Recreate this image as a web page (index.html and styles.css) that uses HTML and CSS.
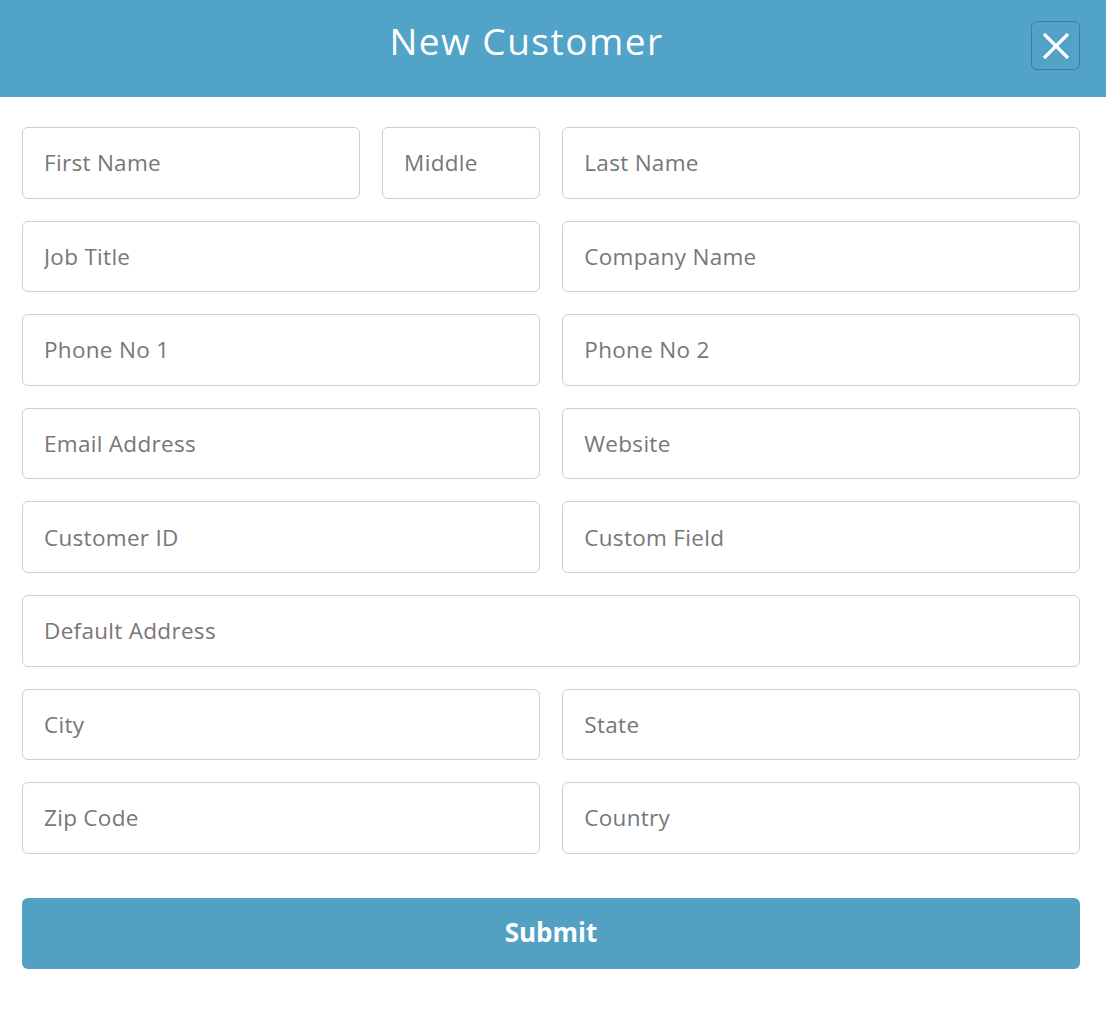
FILE: index.html
```html
<!DOCTYPE html>
<html>
<head>
<meta charset="utf-8">
<link rel="stylesheet" href="styles.css">
</head>
<body>
<div class="modal">
  <header class="head">
    <h1 class="title">New Customer</h1>
    <button class="close" aria-label="Close">
      <svg width="28" height="28" viewBox="0 0 28 28"><path d="M2 2 L26 26 M26 2 L2 26" stroke="#fff" stroke-width="3.2" stroke-linecap="butt"/></svg>
    </button>
  </header>
  <form class="form">
    <div class="row">
      <div class="split">
        <input class="field" placeholder="First Name">
        <input class="field" placeholder="Middle">
      </div>
      <input class="field" placeholder="Last Name">
    </div>
    <div class="row">
      <input class="field" placeholder="Job Title">
      <input class="field" placeholder="Company Name">
    </div>
    <div class="row">
      <input class="field" placeholder="Phone No 1">
      <input class="field" placeholder="Phone No 2">
    </div>
    <div class="row">
      <input class="field" placeholder="Email Address">
      <input class="field" placeholder="Website">
    </div>
    <div class="row">
      <input class="field" placeholder="Customer ID">
      <input class="field" placeholder="Custom Field">
    </div>
    <div class="row one">
      <input class="field" placeholder="Default Address">
    </div>
    <div class="row">
      <input class="field" placeholder="City">
      <input class="field" placeholder="State">
    </div>
    <div class="row">
      <input class="field" placeholder="Zip Code">
      <input class="field" placeholder="Country">
    </div>
    <button type="button" class="submit">Submit</button>
  </form>
</div>
</body>
</html>
```
FILE: styles.css
```css
* { box-sizing: border-box; }
html, body { margin: 0; padding: 0; background: #fff; }
body { font-family: "Open Sans", "Lato", sans-serif; }
.modal { width: 1106px; }
.head {
  height: 97px;
  background: #51a3c8;
  display: flex;
  align-items: center;
  position: relative;
}
.title {
  flex: 1;
  text-align: center;
  margin: 0 53px 16px 0;
  font-weight: 400;
  font-size: 37px;
  color: #fff;
  letter-spacing: 1.5px;
}
.close {
  position: absolute;
  right: 26px;
  top: 21px;
  width: 49px;
  height: 49px;
  border: 1px solid #3d7e9b;
  border-radius: 6px;
  background: transparent;
  display: flex;
  align-items: center;
  justify-content: center;
  padding: 0;
}
.form {
  padding: 30px 26px 0 22px;
  display: flex;
  flex-direction: column;
  gap: 22px;
}
.row {
  display: grid;
  grid-template-columns: 1fr 1fr;
  column-gap: 22.6px;
}
.row.one { grid-template-columns: 1fr; }
.split {
  display: grid;
  grid-template-columns: 1fr 157.6px;
  column-gap: 22.4px;
}
.field {
  height: 71.6px;
  width: 100%;
  border: 1px solid #cfcfcf;
  border-radius: 6px;
  padding: 0 0 0 21px;
  font-family: "Open Sans", "Lato", sans-serif;
  font-size: 22.5px;
  letter-spacing: 0.3px;
  color: #777;
  background: #fff;
}
.field::placeholder { color: #777; opacity: 1; }
.submit {
  margin-top: 22px;
  height: 71.6px;
  padding: 0 0 3px 0;
  border: none;
  border-radius: 6px;
  background: #52a1c3;
  color: #fff;
  font-family: "Open Sans", "Lato", sans-serif;
  font-weight: 700;
  font-size: 26px;
}
```
